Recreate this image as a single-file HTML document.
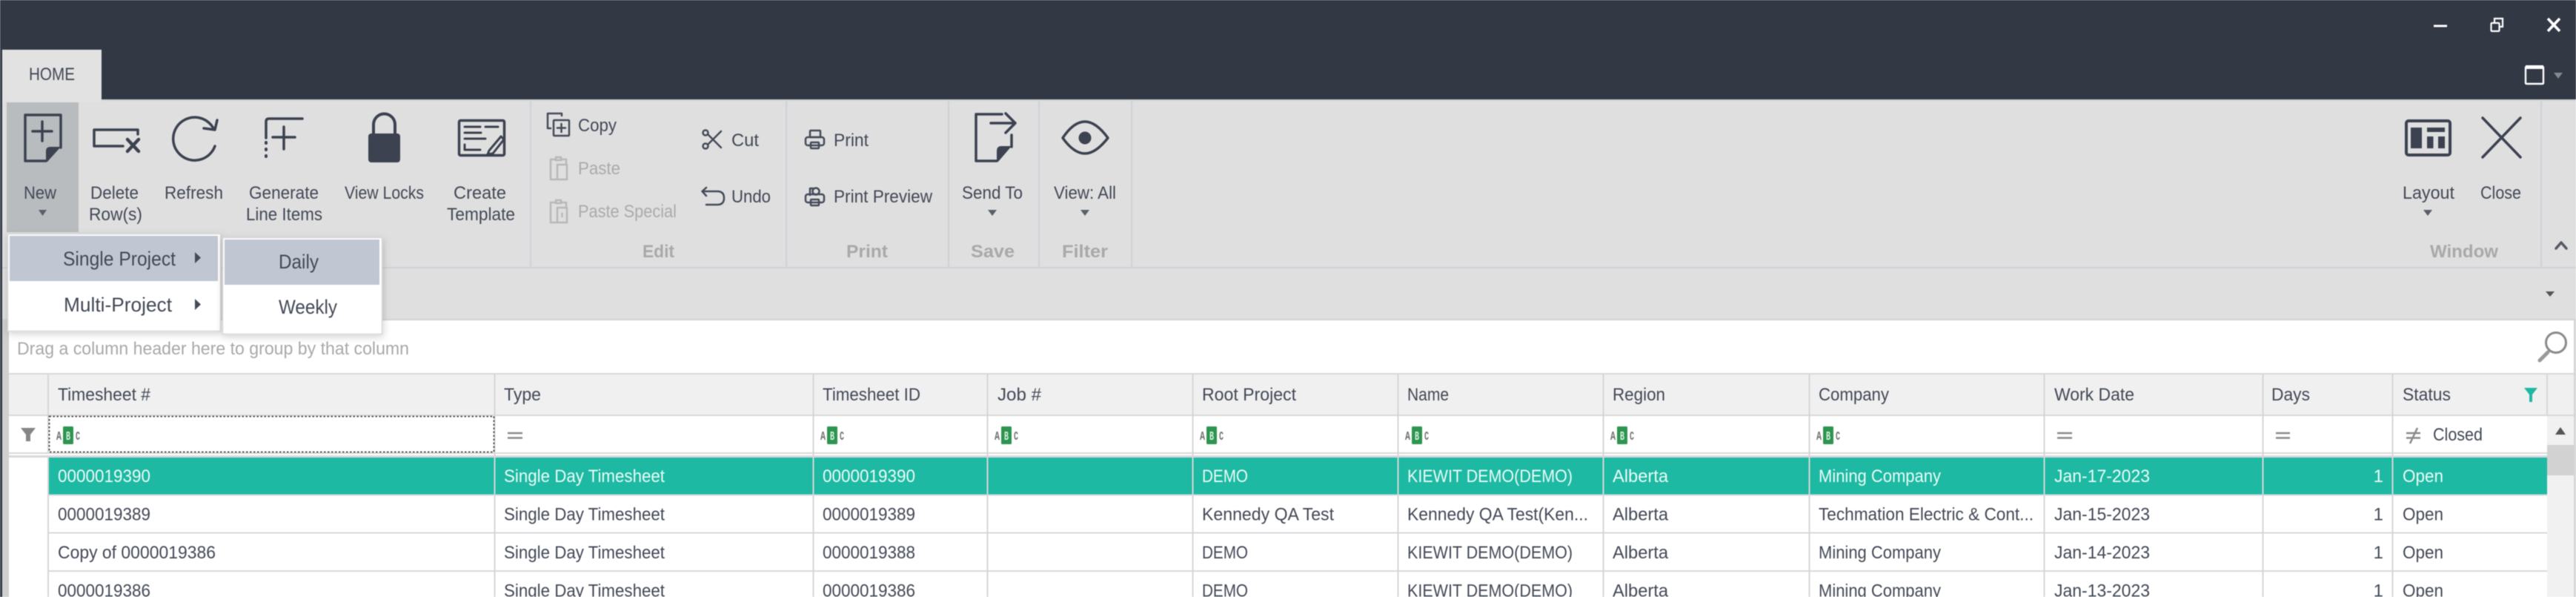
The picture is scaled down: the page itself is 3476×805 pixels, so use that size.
<!DOCTYPE html>
<html><head><meta charset="utf-8"><title>Timesheets</title>
<style>
html,body{margin:0;padding:0;width:3476px;height:805px;overflow:hidden;background:#fff}
svg{display:block;filter:blur(.65px)}
text{font-family:"Liberation Sans",sans-serif;font-size:24px;fill:#434957}
.g text,text.g{font-weight:bold;fill:#a8a9ab}
.d text{fill:#ababab}
.w text{fill:#eafaf6}
.i{fill:none;stroke:#3c4250;stroke-width:3.5;stroke-linecap:round;stroke-linejoin:round}
.s{fill:none;stroke:#454b5a;stroke-width:2.5;stroke-linecap:round;stroke-linejoin:round}
.sd{fill:none;stroke:#b8b8b8;stroke-width:2.5;stroke-linecap:round;stroke-linejoin:round}
.eq{stroke:#8a8a8a;stroke-width:2.5}
.abc text{font-family:"Liberation Mono",monospace;font-size:17px;font-weight:bold;fill:#707070}
.abc text.b{fill:#d8efe0}
</style></head>
<body>
<svg xmlns="http://www.w3.org/2000/svg" width="3476" height="805" viewBox="0 0 3476 805">
<!-- base -->
<rect width="3476" height="805" fill="#dfdfdf"/>
<rect width="3476" height="134" fill="#323844"/>
<rect x="2" y="67" width="135" height="70" fill="#e2e2e2"/>
<rect y="134" x="137" width="3339" height="2" fill="#cfd1d4"/>
<rect x="0" y="60" width="3" height="745" fill="#323844"/>
<text x="39" y="108" textLength="62" lengthAdjust="spacingAndGlyphs">HOME</text>
<!-- ribbon separators -->
<g fill="#d0d2d8">
<rect x="715" y="136" width="2" height="224"/><rect x="1060" y="136" width="2" height="224"/><rect x="1279" y="136" width="2" height="224"/><rect x="1401" y="136" width="2" height="224"/><rect x="1526" y="136" width="2" height="224"/><rect x="3428" y="136" width="2" height="224"/>
<rect x="3" y="360" width="3473" height="2"/>
<rect x="3" y="430" width="3473" height="2"/>
</g>
<!-- New highlight -->
<rect x="9" y="138" width="97" height="175" fill="#b8bcbf"/>
<!-- title controls -->
<g fill="none" stroke="#fff">
<path d="M3284 35H3302" stroke-width="3"/>
<rect x="3361.5" y="31" width="11" height="11" stroke-width="2.2" rx="1"/>
<path d="M3366 31V25H3377V36H3372" stroke-width="2.2"/>
<path d="M3438 25L3454 42M3454 25L3438 42" stroke-width="3.6"/>
<rect x="3408" y="90" width="24" height="23" stroke-width="2.4" rx="1"/>
<rect x="3408" y="88" width="24" height="5" fill="#fff" stroke="none"/>
</g>
<path d="M3446 98H3458L3452 106Z" fill="#85888e"/>
<!-- big icons -->
<g class="i">
<path d="M82 199V155H34V217H62"/><path d="M44 177H70M57 164V190"/>
<path d="M186 181V175H127V197H166"/><path d="M172 188L187 204M187 188L172 204" stroke-width="4.5"/>
<path d="M288 173A29 29 0 1 0 290 197"/><path d="M293 162L290 175L275 173"/>
<path d="M359 186V164Q359 160 363 160H408"/><path d="M368 185H398M383 171V201"/>
<path d="M359 192V193M359 201V202M359 210V211" stroke-width="4"/>
<path d="M504 181V168A14.5 14.5 0 0 1 533 168V181" stroke-width="4"/>
<rect x="619.5" y="162.5" width="61" height="47" rx="2" stroke-width="3.5"/>
<path d="M627 171H648M655 171H672M627 179H649M627 187H655M627 195V202H648M660 203L676 184L680 188L665 207L658 208Z" stroke-width="3"/>
<path d="M1352 154H1317V217H1345"/><path d="M1365 182V198"/><path d="M1337 166H1369M1357 153L1370 166L1357 179"/>
<path d="M1434 186C1444 171 1454 164 1464 164C1474 164 1484 171 1495 186C1484 200 1474 207 1464 207C1454 207 1444 200 1434 186Z"/>
<rect x="3247" y="163" width="59" height="46" rx="3" stroke-width="4"/>
<path d="M3350 159L3401 212M3401 159L3350 212"/>
<path d="M3449 335L3456 327L3463 335" stroke="#555a64"/>
</g>
<g fill="#3c4250">
<path d="M82 198L64 218H62V204Q62 198 68 198Z"/>
<rect x="497" y="180" width="43" height="39" rx="4"/>
<path d="M1365 197L1347 218H1345V204Q1345 197 1351 197Z"/>
<circle cx="1464" cy="186" r="8.5"/>
<rect x="3253" y="172" width="15" height="28"/><rect x="3275" y="172" width="24" height="6"/><rect x="3275" y="184" width="8.5" height="16"/><rect x="3290" y="184" width="9" height="16"/>
<path d="M52 283H63L57.5 291ZM1333 283H1345L1339 291ZM1458 283H1470L1464 291ZM3270 283H3282L3276 291Z" fill="#5a5f68"/>
<path d="M3435 393H3447L3441 400Z" fill="#555"/>
</g>
<!-- small icons -->
<g class="s">
<path d="M758 156V153H739V173H743"/><rect x="747" y="162" width="21" height="21" rx="1"/><path d="M752 172.500H763M757.500 167V178"/>
<circle cx="952" cy="179" r="3.500"/><circle cx="952" cy="197" r="3.500"/><path d="M955 181L973 199M955 195L973 177"/>
<path d="M948 258H968Q977 258 977 267Q977 276 968 276H953M953 253L947.500 258L953 264"/>
<rect x="1093" y="176" width="14" height="9" rx="1"/><rect x="1087" y="185" width="25" height="11" rx="3"/><rect x="1094" y="192" width="11" height="8" rx="1"/>
<circle cx="1101" cy="258" r="4.500"/><path d="M1093 263V254H1097"/><rect x="1087" y="262" width="25" height="11" rx="3"/><rect x="1094" y="269" width="11" height="8" rx="1"/>
</g>
<g class="sd">
<path d="M750 215H743V242H750M757 215H764V220"/><rect x="750" y="212" width="7" height="4"/><path d="M752 222H765V242H752Z"/>
<path d="M750 273H743V300H750M757 273H764V278"/><rect x="750" y="270" width="7" height="4"/><path d="M752 280H765V300H752Z"/><path d="M758.500 288V292"/>
</g>
<!-- ribbon labels -->
<g>
<text x="32" y="268" textLength="44" lengthAdjust="spacingAndGlyphs">New</text>
<text x="122" y="268" textLength="65" lengthAdjust="spacingAndGlyphs">Delete</text>
<text x="120" y="297" textLength="72" lengthAdjust="spacingAndGlyphs">Row(s)</text>
<text x="222" y="268" textLength="79" lengthAdjust="spacingAndGlyphs">Refresh</text>
<text x="336" y="268" textLength="94" lengthAdjust="spacingAndGlyphs">Generate</text>
<text x="332" y="297" textLength="103" lengthAdjust="spacingAndGlyphs">Line Items</text>
<text x="465" y="268" textLength="107" lengthAdjust="spacingAndGlyphs">View Locks</text>
<text x="612" y="268" textLength="71" lengthAdjust="spacingAndGlyphs">Create</text>
<text x="603" y="297" textLength="92" lengthAdjust="spacingAndGlyphs">Template</text>
<text x="780" y="177" textLength="52" lengthAdjust="spacingAndGlyphs">Copy</text>
<text x="987" y="197" textLength="37" lengthAdjust="spacingAndGlyphs">Cut</text>
<text x="987" y="273" textLength="53" lengthAdjust="spacingAndGlyphs">Undo</text>
<text x="1125" y="197" textLength="47" lengthAdjust="spacingAndGlyphs">Print</text>
<text x="1125" y="273" textLength="133" lengthAdjust="spacingAndGlyphs">Print Preview</text>
<text x="1298" y="268" textLength="82" lengthAdjust="spacingAndGlyphs">Send To</text>
<text x="1422" y="268" textLength="84" lengthAdjust="spacingAndGlyphs">View: All</text>
<text x="3242" y="268" textLength="70" lengthAdjust="spacingAndGlyphs">Layout</text>
<text x="3347" y="268" textLength="55" lengthAdjust="spacingAndGlyphs">Close</text>
</g>
<g class="d">
<text x="780" y="235" textLength="57" lengthAdjust="spacingAndGlyphs">Paste</text>
<text x="780" y="293" textLength="133" lengthAdjust="spacingAndGlyphs">Paste Special</text>
</g>
<g class="g">
<text x="867" y="347" textLength="43" lengthAdjust="spacingAndGlyphs">Edit</text>
<text x="1142" y="347" textLength="56" lengthAdjust="spacingAndGlyphs">Print</text>
<text x="1310" y="347" textLength="59" lengthAdjust="spacingAndGlyphs">Save</text>
<text x="1433" y="347" textLength="62" lengthAdjust="spacingAndGlyphs">Filter</text>
<text x="3279" y="347" textLength="92" lengthAdjust="spacingAndGlyphs">Window</text>
</g>
<!-- group panel -->
<rect x="3" y="432" width="9" height="373" fill="#cfcfcf"/>
<rect x="12" y="432" width="3461" height="373" fill="#fff"/>
<rect x="3473" y="432" width="3" height="373" fill="#d6d6d6"/>
<text x="23" y="478" textLength="529" lengthAdjust="spacingAndGlyphs" style="fill:#a9a9a9">Drag a column header here to group by that column</text>
<circle cx="3449" cy="462" r="13.500" fill="none" stroke="#8a8a8a" stroke-width="3"/>
<path d="M3438 475L3427 486" stroke="#9a9a9a" stroke-width="5" stroke-linecap="round"/>
<!-- grid header -->
<rect x="12" y="503" width="3461" height="58" fill="#d8d8d8"/>
<rect x="12" y="505" width="3461" height="54" fill="#f0f0f0"/>
<rect x="12" y="610" width="3425" height="2" fill="#d8d8d8"/>
<rect x="12" y="614" width="3425" height="3" fill="#d8d8dc"/>
<!-- scrollbar -->
<rect x="3437" y="561" width="36" height="244" fill="#f1f1f1"/>
<rect x="3437" y="600" width="36" height="41" fill="#d2d2d2"/>
<path d="M3448 586L3455 576L3462 586Z" fill="#555"/>
<!-- teal row -->
<rect x="66" y="617" width="3371" height="50" fill="#1db9a3"/>
<!-- rows lines -->
<g fill="#d8d8dc">
<rect x="66" y="666.500" width="3371" height="2"/><rect x="66" y="717.500" width="3371" height="2"/><rect x="66" y="769" width="3371" height="2"/>
</g>
<!-- column lines -->
<g fill="#d6d6d6">
<rect x="64" y="505" width="2" height="105"/>
<rect x="64" y="617" width="2" height="188"/>
<rect x="666.500" y="505" width="2" height="300"/><rect x="1096.500" y="505" width="2" height="300"/><rect x="1331.500" y="505" width="2" height="300"/><rect x="1608.500" y="505" width="2" height="300"/><rect x="1885.500" y="505" width="2" height="300"/><rect x="2162.500" y="505" width="2" height="300"/><rect x="2440.500" y="505" width="2" height="300"/><rect x="2757.500" y="505" width="2" height="300"/><rect x="3052.500" y="505" width="2" height="300"/><rect x="3227.500" y="505" width="2" height="300"/>
<rect x="3436" y="505" width="2" height="54"/>
</g>
<rect x="66.500" y="561.500" width="600" height="48" fill="#fff" stroke="#555" stroke-width="2" stroke-dasharray="2.500 2.500"/>
<!-- header text -->
<g>
<text x="78" y="540" textLength="125" lengthAdjust="spacingAndGlyphs">Timesheet #</text>
<text x="680" y="540" textLength="50" lengthAdjust="spacingAndGlyphs">Type</text>
<text x="1110" y="540" textLength="132" lengthAdjust="spacingAndGlyphs">Timesheet ID</text>
<text x="1346" y="540" textLength="59" lengthAdjust="spacingAndGlyphs">Job #</text>
<text x="1622" y="540" textLength="127" lengthAdjust="spacingAndGlyphs">Root Project</text>
<text x="1899" y="540" textLength="56" lengthAdjust="spacingAndGlyphs">Name</text>
<text x="2176" y="540" textLength="71" lengthAdjust="spacingAndGlyphs">Region</text>
<text x="2454" y="540" textLength="95" lengthAdjust="spacingAndGlyphs">Company</text>
<text x="2772" y="540" textLength="108" lengthAdjust="spacingAndGlyphs">Work Date</text>
<text x="3065" y="540" textLength="52" lengthAdjust="spacingAndGlyphs">Days</text>
<text x="3242" y="540" textLength="65" lengthAdjust="spacingAndGlyphs">Status</text>
</g>
<path d="M3406 523H3424L3417 532V542H3413V532Z" fill="#1fb8a2"/>
<!-- filter row -->
<path d="M28 577H48L41 586V595H35V586Z" fill="#868686"/>
<g class="abc">
<g><rect x="85" y="575" width="14" height="24" rx="1.500" fill="#2e9550"/><text x="76" y="593" textLength="7" lengthAdjust="spacingAndGlyphs">A</text><text class="b" x="89" y="593" textLength="6" lengthAdjust="spacingAndGlyphs">B</text><text x="102" y="593" textLength="6" lengthAdjust="spacingAndGlyphs">C</text></g>
<g transform="translate(1031 0)"><rect x="85" y="575" width="14" height="24" rx="1.500" fill="#2e9550"/><text x="76" y="593" textLength="7" lengthAdjust="spacingAndGlyphs">A</text><text class="b" x="89" y="593" textLength="6" lengthAdjust="spacingAndGlyphs">B</text><text x="102" y="593" textLength="6" lengthAdjust="spacingAndGlyphs">C</text></g>
<g transform="translate(1266 0)"><rect x="85" y="575" width="14" height="24" rx="1.500" fill="#2e9550"/><text x="76" y="593" textLength="7" lengthAdjust="spacingAndGlyphs">A</text><text class="b" x="89" y="593" textLength="6" lengthAdjust="spacingAndGlyphs">B</text><text x="102" y="593" textLength="6" lengthAdjust="spacingAndGlyphs">C</text></g>
<g transform="translate(1543 0)"><rect x="85" y="575" width="14" height="24" rx="1.500" fill="#2e9550"/><text x="76" y="593" textLength="7" lengthAdjust="spacingAndGlyphs">A</text><text class="b" x="89" y="593" textLength="6" lengthAdjust="spacingAndGlyphs">B</text><text x="102" y="593" textLength="6" lengthAdjust="spacingAndGlyphs">C</text></g>
<g transform="translate(1820 0)"><rect x="85" y="575" width="14" height="24" rx="1.500" fill="#2e9550"/><text x="76" y="593" textLength="7" lengthAdjust="spacingAndGlyphs">A</text><text class="b" x="89" y="593" textLength="6" lengthAdjust="spacingAndGlyphs">B</text><text x="102" y="593" textLength="6" lengthAdjust="spacingAndGlyphs">C</text></g>
<g transform="translate(2097 0)"><rect x="85" y="575" width="14" height="24" rx="1.500" fill="#2e9550"/><text x="76" y="593" textLength="7" lengthAdjust="spacingAndGlyphs">A</text><text class="b" x="89" y="593" textLength="6" lengthAdjust="spacingAndGlyphs">B</text><text x="102" y="593" textLength="6" lengthAdjust="spacingAndGlyphs">C</text></g>
<g transform="translate(2375 0)"><rect x="85" y="575" width="14" height="24" rx="1.500" fill="#2e9550"/><text x="76" y="593" textLength="7" lengthAdjust="spacingAndGlyphs">A</text><text class="b" x="89" y="593" textLength="6" lengthAdjust="spacingAndGlyphs">B</text><text x="102" y="593" textLength="6" lengthAdjust="spacingAndGlyphs">C</text></g>
</g>
<path class="eq" d="M685 584H705M685 590.500H705M2776 584H2796M2776 590.500H2796M3071 584H3090M3071 590.500H3090M3247 584H3266M3247 590.500H3266M3252 598L3262 577" fill="none"/>
<text x="3283" y="594" textLength="67" lengthAdjust="spacingAndGlyphs">Closed</text>
<!-- rows -->
<g class="w">
<text x="78" y="650" textLength="125" lengthAdjust="spacingAndGlyphs">0000019390</text>
<text x="680" y="650" textLength="217" lengthAdjust="spacingAndGlyphs">Single Day Timesheet</text>
<text x="1110" y="650" textLength="125" lengthAdjust="spacingAndGlyphs">0000019390</text>
<text x="1622" y="650" textLength="62" lengthAdjust="spacingAndGlyphs">DEMO</text>
<text x="1899" y="650" textLength="223" lengthAdjust="spacingAndGlyphs">KIEWIT DEMO(DEMO)</text>
<text x="2176" y="650" textLength="75" lengthAdjust="spacingAndGlyphs">Alberta</text>
<text x="2454" y="650" textLength="165" lengthAdjust="spacingAndGlyphs">Mining Company</text>
<text x="2772" y="650" textLength="129" lengthAdjust="spacingAndGlyphs">Jan-17-2023</text>
<text x="3216" y="650" text-anchor="end">1</text>
<text x="3242" y="650" textLength="55" lengthAdjust="spacingAndGlyphs">Open</text>
</g>
<g>
<text x="78" y="701.500" textLength="125" lengthAdjust="spacingAndGlyphs">0000019389</text>
<text x="680" y="701.500" textLength="217" lengthAdjust="spacingAndGlyphs">Single Day Timesheet</text>
<text x="1110" y="701.500" textLength="125" lengthAdjust="spacingAndGlyphs">0000019389</text>
<text x="1622" y="701.500" textLength="178" lengthAdjust="spacingAndGlyphs">Kennedy QA Test</text>
<text x="1899" y="701.500" textLength="244" lengthAdjust="spacingAndGlyphs">Kennedy QA Test(Ken...</text>
<text x="2176" y="701.500" textLength="75" lengthAdjust="spacingAndGlyphs">Alberta</text>
<text x="2454" y="701.500" textLength="290" lengthAdjust="spacingAndGlyphs">Techmation Electric &amp; Cont...</text>
<text x="2772" y="701.500" textLength="129" lengthAdjust="spacingAndGlyphs">Jan-15-2023</text>
<text x="3216" y="701.500" text-anchor="end">1</text>
<text x="3242" y="701.500" textLength="55" lengthAdjust="spacingAndGlyphs">Open</text>
<text x="78" y="753" textLength="213" lengthAdjust="spacingAndGlyphs">Copy of 0000019386</text>
<text x="680" y="753" textLength="217" lengthAdjust="spacingAndGlyphs">Single Day Timesheet</text>
<text x="1110" y="753" textLength="125" lengthAdjust="spacingAndGlyphs">0000019388</text>
<text x="1622" y="753" textLength="62" lengthAdjust="spacingAndGlyphs">DEMO</text>
<text x="1899" y="753" textLength="223" lengthAdjust="spacingAndGlyphs">KIEWIT DEMO(DEMO)</text>
<text x="2176" y="753" textLength="75" lengthAdjust="spacingAndGlyphs">Alberta</text>
<text x="2454" y="753" textLength="165" lengthAdjust="spacingAndGlyphs">Mining Company</text>
<text x="2772" y="753" textLength="129" lengthAdjust="spacingAndGlyphs">Jan-14-2023</text>
<text x="3216" y="753" text-anchor="end">1</text>
<text x="3242" y="753" textLength="55" lengthAdjust="spacingAndGlyphs">Open</text>
<text x="78" y="804.500" textLength="125" lengthAdjust="spacingAndGlyphs">0000019386</text>
<text x="680" y="804.500" textLength="217" lengthAdjust="spacingAndGlyphs">Single Day Timesheet</text>
<text x="1110" y="804.500" textLength="125" lengthAdjust="spacingAndGlyphs">0000019386</text>
<text x="1622" y="804.500" textLength="62" lengthAdjust="spacingAndGlyphs">DEMO</text>
<text x="1899" y="804.500" textLength="223" lengthAdjust="spacingAndGlyphs">KIEWIT DEMO(DEMO)</text>
<text x="2176" y="804.500" textLength="75" lengthAdjust="spacingAndGlyphs">Alberta</text>
<text x="2454" y="804.500" textLength="165" lengthAdjust="spacingAndGlyphs">Mining Company</text>
<text x="2772" y="804.500" textLength="129" lengthAdjust="spacingAndGlyphs">Jan-13-2023</text>
<text x="3216" y="804.500" text-anchor="end">1</text>
<text x="3242" y="804.500" textLength="55" lengthAdjust="spacingAndGlyphs">Open</text>
</g>
<!-- menus -->
<defs><filter id="sh" x="-10%" y="-10%" width="120%" height="125%"><feDropShadow dx="1" dy="3" stdDeviation="5" flood-color="#000" flood-opacity=".18"/></filter></defs>
<rect x="10.500" y="315.500" width="287" height="131" fill="#fff" stroke="#d8d8d8" stroke-width="1.500" filter="url(#sh)"/>
<rect x="13" y="318" width="281" height="61" fill="#c0c7d3"/>
<text x="85" y="358" style="font-size:27px" textLength="152" lengthAdjust="spacingAndGlyphs">Single Project</text>
<text x="86" y="420" style="font-size:27px" textLength="146" lengthAdjust="spacingAndGlyphs">Multi-Project</text>
<path d="M263 340L271 347.500L263 355ZM263 403L271 410.500L263 418Z" fill="#454b59"/>
<rect x="300.500" y="320.500" width="215" height="130" fill="#fff" stroke="#d8d8d8" stroke-width="1.500" filter="url(#sh)"/>
<rect x="303" y="323" width="209" height="61" fill="#c0c7d3"/>
<text x="376" y="362" style="font-size:27px" textLength="54" lengthAdjust="spacingAndGlyphs">Daily</text>
<text x="376" y="423" style="font-size:27px" textLength="79" lengthAdjust="spacingAndGlyphs">Weekly</text>
</svg>
</body></html>
